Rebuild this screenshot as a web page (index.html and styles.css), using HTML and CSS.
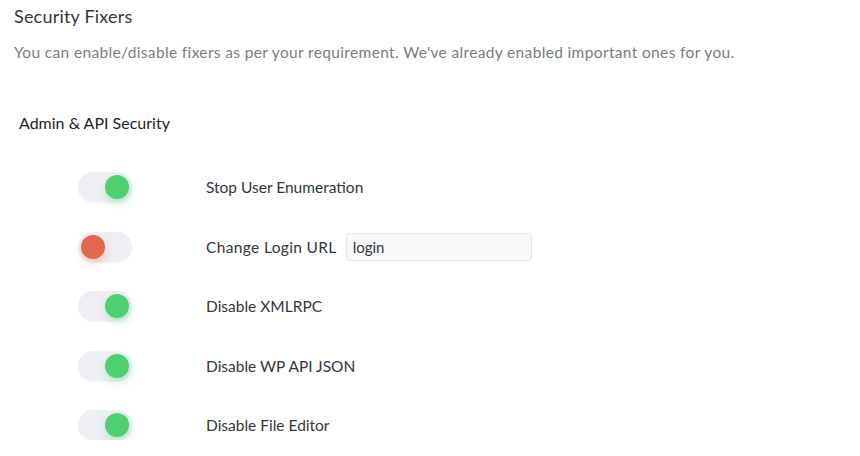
FILE: index.html
```html
<!DOCTYPE html>
<html>
<head>
<meta charset="utf-8">
<link rel="stylesheet" href="styles.css">
</head>
<body>
<div class="page">
  <h1 class="title">Security Fixers</h1>
  <p class="desc">You can enable/disable fixers as per your requirement. We've already enabled important ones for you.</p>
  <h2 class="section">Admin &amp; API Security</h2>
  <div class="list">
    <div class="row">
      <span class="toggle on"><span class="knob"></span></span>
      <span class="label">Stop User Enumeration</span>
    </div>
    <div class="row">
      <span class="toggle off"><span class="knob"></span></span>
      <span class="label wide">Change Login URL</span>
      <input class="field" type="text" value="login">
    </div>
    <div class="row">
      <span class="toggle on"><span class="knob"></span></span>
      <span class="label">Disable XMLRPC</span>
    </div>
    <div class="row">
      <span class="toggle on"><span class="knob"></span></span>
      <span class="label">Disable WP API JSON</span>
    </div>
    <div class="row">
      <span class="toggle on"><span class="knob"></span></span>
      <span class="label">Disable File Editor</span>
    </div>
  </div>
</div>
</body>
</html>
```
FILE: styles.css
```css
html, body {
  margin: 0;
  padding: 0;
  background: #ffffff;
}
.page {
  font-family: "Lato", "Open Sans", sans-serif;
  padding: 4px 14px 0 14px;
  color: #32373c;
}
.title {
  margin: 0;
  font-size: 18px;
  font-weight: 400;
  line-height: 24px;
  letter-spacing: 0.2px;
  color: #32373c;
}
.desc {
  margin: 14px 0 0 0;
  font-size: 15.5px;
  line-height: 20px;
  letter-spacing: 0.35px;
  color: #777c82;
}
.section {
  margin: 50px 0 0 5px;
  font-size: 16px;
  font-weight: 400;
  line-height: 22px;
  color: #1e1e1e;
}
.list {
  margin-top: 38px;
  display: flex;
  flex-direction: column;
  gap: 29.5px;
  padding-left: 64px;
}
.row {
  display: flex;
  align-items: center;
  height: 30px;
}
.toggle {
  position: relative;
  width: 54px;
  height: 30px;
  border-radius: 15px;
  background: #eeeff4;
  flex: none;
  box-shadow: 0 1px 2px rgba(0,0,0,0.04);
}
.knob {
  position: absolute;
  top: 3px;
  width: 24px;
  height: 24px;
  border-radius: 50%;
}
.toggle.on .knob {
  right: 3px;
  background: #4fcf6f;
  box-shadow: 1px 4px 8px rgba(79,207,111,0.35);
}
.toggle.off .knob {
  left: 3px;
  background: #e0684f;
  box-shadow: 1px 4px 8px rgba(224,104,79,0.3);
}
.label {
  margin-left: 74px;
  font-size: 15.5px;
  color: #32373c;
}
.label.wide {
  letter-spacing: 0.35px;
}
.field {
  margin-left: 9px;
  width: 186px;
  height: 28px;
  box-sizing: border-box;
  border: 1px solid #e6e6e6;
  border-radius: 4px;
  background: #f8f8f8;
  padding: 0 6px;
  font-family: "Lato", "Open Sans", sans-serif;
  font-size: 15px;
  color: #32373c;
  outline: none;
}
```
